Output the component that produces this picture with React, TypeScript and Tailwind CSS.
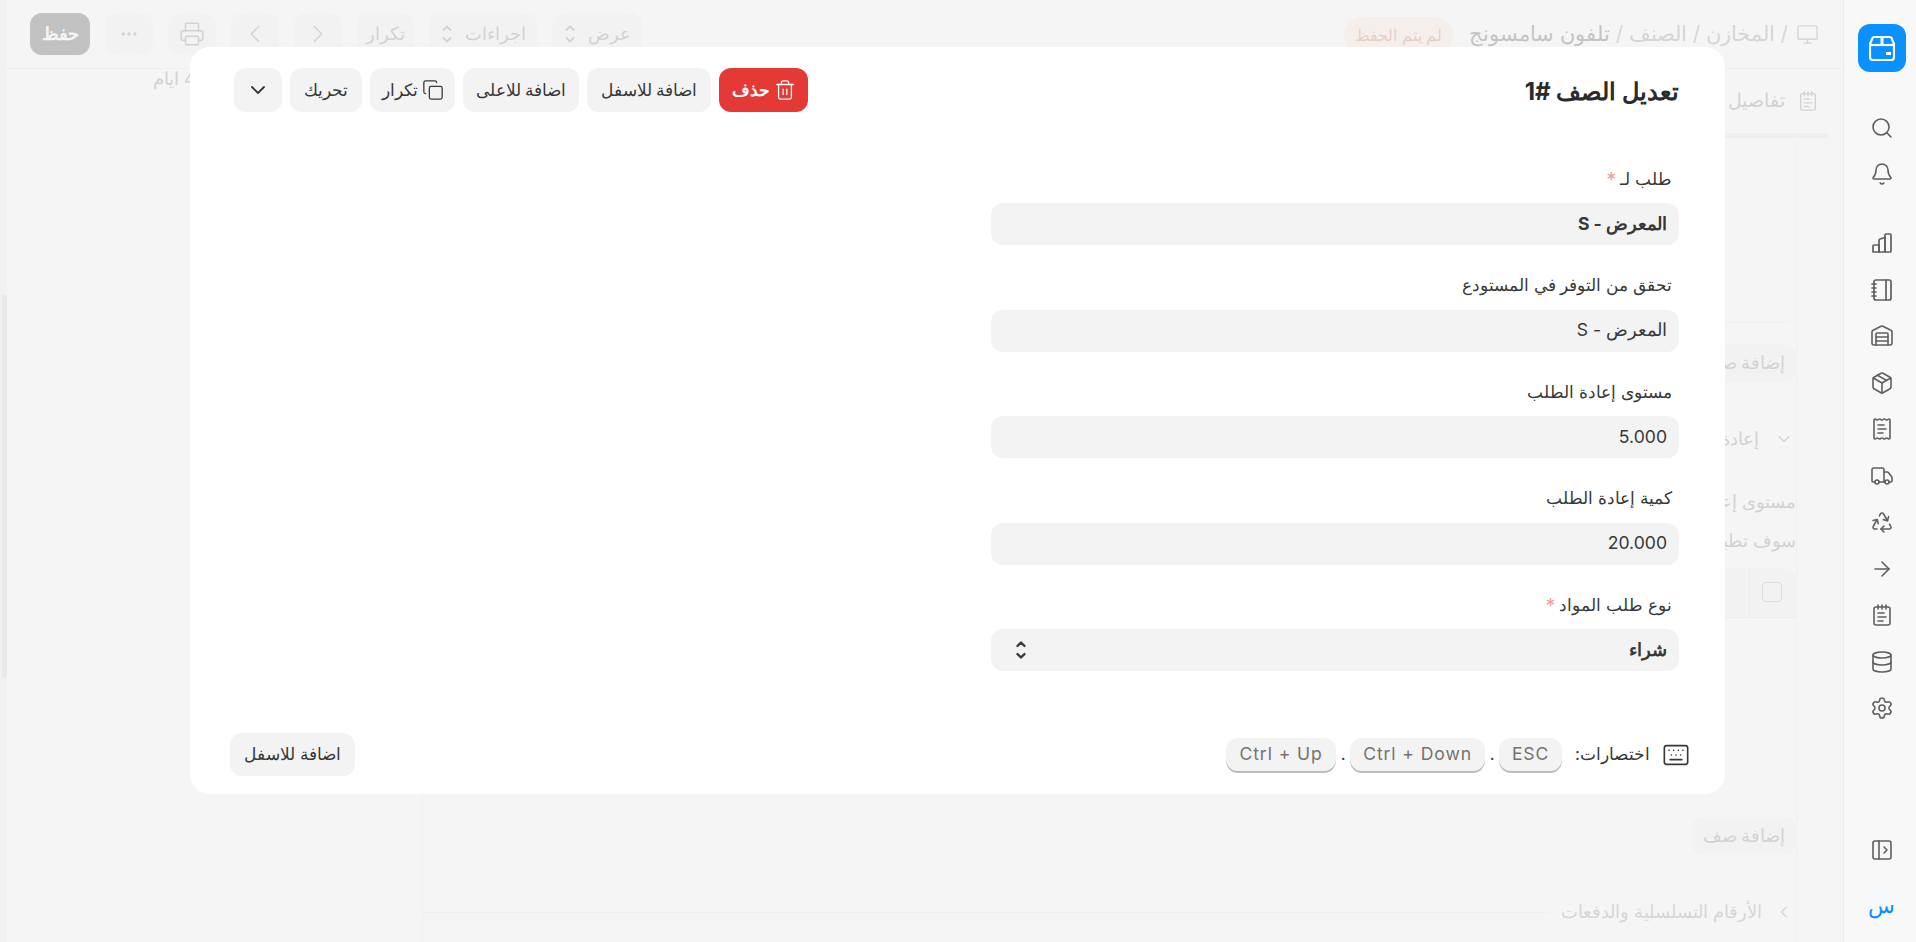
import React from 'react';
import {
  ArrowRight, Bell, ChevronDown, ChevronLeft, ChevronRight, Copy, Database, Ellipsis,
  Keyboard, Monitor, NotepadText, Package, PanelLeftOpen, Printer, ReceiptText, Recycle, Search, Settings,
  Trash2, Truck, Warehouse,
} from 'lucide-react';

const StoreLogo = () => (
  <svg width="26" height="26" viewBox="0 0 26 26" fill="none" stroke="white" strokeWidth="2.2">
    <path d="M5 2 H21 Q22 2 22.500 3 L25 9 V22 Q25 25 22 25 H4 Q1 25 1 22 V9 L3.500 3 Q4 2 5 2 Z" />
    <path d="M1 10 H25" />
    <path d="M13 2 V10" strokeWidth="3" />
    <rect x="17" y="17" width="5" height="3" fill="white" stroke="none" />
  </svg>
);

const BarsIcon = () => (
  <svg width="24" height="24" viewBox="0 0 24 24" fill="none" stroke="#5f5f5f" strokeWidth="1.7" strokeLinejoin="round">
    <path d="M3 21 V15 Q3 14 4 14 H9 V21 Z" />
    <path d="M9 21 V9.500 Q9 8.500 10 8 L15 6.500 V21 Z" />
    <path d="M15 21 V4 Q15 3 16 3 H20 Q21 3 21 4 V20 Q21 21 20 21 Z" />
  </svg>
);

const SpiralIcon = () => (
  <svg width="24" height="24" viewBox="0 0 24 24" fill="none" stroke="#5f5f5f" strokeWidth="1.7" strokeLinecap="round">
    <rect x="4" y="2" width="17" height="20" rx="2" />
    <path d="M16 2 V22 M2 6 H6 M2 10 H6 M2 14 H6 M2 18 H6" />
  </svg>
);

const UpDown = ({ w = 2.4 }: { w?: number }) => (
  <svg width="12" height="20" viewBox="0 0 12 20" fill="none" stroke="currentColor" strokeWidth={w} strokeLinecap="round" strokeLinejoin="round">
    <path d="M2.500 6 L6 2.500 L9.500 6" />
    <path d="M2.500 14 L6 17.500 L9.500 14" />
  </svg>
);

const railTop = [Search, Bell];
const railMid = [Warehouse, Package, ReceiptText, Truck, Recycle, ArrowRight, NotepadText, Database, Settings];

const fields = [
  { label: 'طلب لـ', value: 'المعرض - S', req: true, bold: true },
  { label: 'تحقق من التوفر في المستودع', value: 'المعرض - S', req: false, bold: false },
  { label: 'مستوى إعادة الطلب', value: '5.000', req: false, bold: false },
  { label: 'كمية إعادة الطلب', value: '20.000', req: false, bold: false },
];

const GhostBtn = ({ className, children }: { className: string; children: React.ReactNode }) => (
  <div className={`h-[42px] rounded-xl bg-[#f2f2f2] flex items-center justify-center text-[17.6px] text-[#d2d2d2] ${className}`}>
    {children}
  </div>
);

const ModalBtn = ({ className, children }: { className: string; children: React.ReactNode }) => (
  <button className={`h-[44px] rounded-xl bg-[#f3f3f3] flex items-center justify-center gap-1 text-[17.4px] text-[#383838] ${className}`}>
    {children}
  </button>
);

const Kbd = ({ children, className }: { children: React.ReactNode; className: string }) => (
  <span className={`h-[33px] rounded-xl bg-[#f3f3f3] shadow-[0_2px_0_#bcbcbc] flex items-center justify-center text-[17.6px] tracking-[0.9px] text-[#77716f] ${className}`}>
    {children}
  </span>
);

export default function App() {
  return (
    <div dir="rtl" className="relative flex h-[942px] w-[1916px] overflow-hidden bg-[#f5f5f5] font-['Inter','Noto_Sans',sans-serif]">
      {/* right rail */}
      <aside className="w-[73px] shrink-0 h-full bg-[#f8f8f8] border-l border-[#ececec] flex flex-col items-center pt-6 pb-[21px] pl-[3px]">
        <div className="w-12 h-12 rounded-xl bg-[#0a90ff] flex items-center justify-center">
          <StoreLogo />
        </div>
        <div className="flex flex-col items-center gap-[22px] mt-[44px] text-[#5f5f5f]">
          {railTop.map((Icon, i) => <Icon key={i} size={24} strokeWidth={1.6} />)}
        </div>
        <div className="flex flex-col items-center gap-[22.5px] mt-[45px] text-[#5f5f5f]">
          <BarsIcon />
          <SpiralIcon />
          {railMid.map((Icon, i) => <Icon key={i} size={24} strokeWidth={1.6} />)}
        </div>
        <div className="mt-auto flex flex-col items-center gap-[27px] text-[#5f5f5f]">
          <PanelLeftOpen size={24} strokeWidth={1.6} />
          <div className="w-8 h-8 rounded-full bg-[#f6f9fc] flex items-center justify-center text-[22px] text-[#0a90ff]">س</div>
        </div>
      </aside>

      {/* page behind the dialog */}
      <main className="flex-1 min-w-0 flex flex-col text-[#d2d2d2]">
        <header className="h-[69px] shrink-0 border-b border-[#efefef] flex items-start justify-between pr-[24px] pl-[23px] pt-[13px]">
          <div className="flex items-center gap-2 text-[20.500px] h-[42px] text-[#d6d6d6]">
            <Monitor size={23} strokeWidth={1.5} />
            <span>/ المخازن / الصنف / <span className="text-[#c4c4c4]">تلفون سامسونج</span></span>
            <span className="mr-2 w-[109px] justify-center h-[36px] mt-[2px] rounded-full bg-[#f5efec] text-[#e8cfc4] text-[16px] whitespace-nowrap flex items-center">لم يتم الحفظ</span>
          </div>
          <div className="flex items-center gap-[15px]">
            <GhostBtn className="w-[90px] gap-3 mr-[2px]">عرض <UpDown w={1.8} /></GhostBtn>
            <GhostBtn className="w-[108px] gap-3">اجراءات <UpDown w={1.8} /></GhostBtn>
            <GhostBtn className="w-[57px]">تكرار</GhostBtn>
            <GhostBtn className="w-[48px]"><ChevronRight size={30} strokeWidth={1.1} /></GhostBtn>
            <GhostBtn className="w-[48px]"><ChevronLeft size={30} strokeWidth={1.1} /></GhostBtn>
            <GhostBtn className="w-[48px]"><Printer size={26} strokeWidth={1.4} /></GhostBtn>
            <GhostBtn className="w-[48px]"><Ellipsis size={20} /></GhostBtn>
            <div className="h-[42px] w-[60px] rounded-xl bg-[#c2c2c2] text-[#f5f5f5] font-bold text-[17.6px] flex items-center justify-center">حفظ</div>
          </div>
        </header>

        <div className="h-[64px] shrink-0 flex justify-between pr-[24px] pl-[146px] pt-[12px]">
          <div className="flex items-center gap-[12px] h-[40px] text-[18.500px]"><NotepadText size={22} strokeWidth={1.5} /> تفاصيل</div>
          <span className="text-[17.6px] h-[20px] mt-[-15px] whitespace-nowrap">4 ايام</span>
        </div>

        {/* tab strip scrollbar */}
        <div className="h-[5px] mr-[15px] ml-[400px] shrink-0 bg-[#eeeeee] rounded-full" />
        <div className="h-[5px] shrink-0" />

        <div className="flex-1 min-h-0 mr-[46px] ml-[415px] border-r border-l border-[#f0f0f0] flex flex-col items-start text-[17.6px]">
          <div className="h-[180px] w-full border-b border-[#f0f0f0] rounded-b-xl shrink-0" />
          <div className="mt-[21px] h-[38px] w-[104px] rounded-xl bg-[#f2f2f2] flex items-center justify-center shrink-0">إضافة صف</div>
          <div className="mt-[45px] h-[24px] flex items-center gap-[15px] pr-[2px] shrink-0"><ChevronDown size={20} strokeWidth={1.3} /> إعادة الطلب</div>
          <div className="mt-[39px] h-[24px] flex items-center shrink-0">مستوى إعادة الطلب</div>
          <div className="mt-[15px] h-[24px] flex items-center shrink-0">سوف تطبق</div>
          <div className="mt-[15px] h-[50px] w-full rounded-t-xl bg-[#f2f2f2] border-b border-[#ededed] flex items-stretch shrink-0">
            <div className="w-[47px] border-l border-[#ededed] flex items-center pr-[14px] pb-[2px]">
              <span className="w-5 h-5 rounded border border-[#dcdcdc]" />
            </div>
          </div>
          <div className="mt-[199px] h-[38px] w-[104px] rounded-xl bg-[#f2f2f2] flex items-center justify-center shrink-0">إضافة صف</div>
          <div className="mt-[45px] w-full h-[24px] flex items-center gap-[12px] pr-[2px] shrink-0">
            <ChevronLeft size={20} strokeWidth={1.3} />
            <span className="text-[#d6d6d6]">الأرقام التسلسلية والدفعات</span>
            <span className="flex-1 border-t border-[#f0f0f0]" />
          </div>
        </div>
      </main>

      {/* scrollbar track on the far left */}
      <div className="w-[7px] shrink-0 bg-[#f1f1f1] pt-[295px]">
        <div className="w-[5px] h-[383px] bg-[#e9e9e9] rounded-r-[3px]" />
      </div>

      {/* dialog */}
      <section className="absolute right-[191px] top-[47px] w-[1535px] h-[747px] rounded-[20px] bg-white flex flex-col text-[#383838]">
        <div className="flex items-center justify-between pr-[46px] pl-[44px] pt-[21px]">
          <h2 className="text-[24px] font-bold text-[#2b2b2b] mt-[3px]">تعديل الصف #1</h2>
          <div className="flex items-center gap-2">
            <button className="h-[44px] w-[89px] rounded-xl bg-[#e53935] text-white font-bold text-[17.4px] flex items-center justify-center gap-1">
              <Trash2 size={22} strokeWidth={1.4} /> حذف
            </button>
            <ModalBtn className="w-[124px]">اضافة للاسفل</ModalBtn>
            <ModalBtn className="w-[116px]">اضافة للاعلى</ModalBtn>
            <ModalBtn className="w-[85px]"><Copy size={22} strokeWidth={1.4} /> تكرار</ModalBtn>
            <ModalBtn className="w-[72px]">تحريك</ModalBtn>
            <ModalBtn className="w-[48px]"><ChevronDown size={24} strokeWidth={1.8} /></ModalBtn>
          </div>
        </div>

        <div className="pr-[46px] mt-[50px] flex flex-col w-[734px]">
          {fields.map((f, i) => (
            <div key={i} className="h-[106.500px] flex flex-col">
              <label className="h-[35px] pr-[7px] text-[17px] text-[#383838] flex items-center">
                {f.label}{f.req && <span className="text-[#f0a0a0] text-[20px] mr-1">*</span>}
              </label>
              <div className={`mt-[6px] h-[42px] rounded-xl bg-[#f3f3f3] flex items-center px-3 text-[17.6px] ${f.bold ? 'font-bold' : ''}`}>{f.value}</div>
            </div>
          ))}
          <div className="flex flex-col">
            <label className="h-[35px] pr-[7px] text-[17px] flex items-center">نوع طلب المواد<span className="text-[#f0a0a0] text-[20px] mr-1">*</span></label>
            <div className="mt-[6px] h-[42px] rounded-xl bg-[#f3f3f3] flex items-center justify-between px-3 pl-[24px] text-[17.6px] font-bold">
              شراء
              <UpDown />
            </div>
          </div>
        </div>

        <div className="mt-auto pb-[18px] pr-[35px] pl-[40px] flex items-center justify-between">
          <div className="flex items-center text-[17px]">
            <Keyboard size={28} strokeWidth={1.4} />
            <span className="mr-[12px] ml-[13px]">اختصارات:</span>
            <Kbd className="w-[63px]">ESC</Kbd>
            <span className="w-[14px] text-center">.</span>
            <Kbd className="w-[135px]">Ctrl + Down</Kbd>
            <span className="w-[14px] text-center">.</span>
            <Kbd className="w-[110px]">Ctrl + Up</Kbd>
          </div>
          <button className="h-[43px] w-[125px] rounded-xl bg-[#f3f3f3] text-[17.4px] text-[#383838]">اضافة للاسفل</button>
        </div>
      </section>
    </div>
  );
}
